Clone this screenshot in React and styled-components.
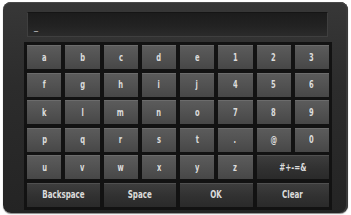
import styled, { createGlobalStyle } from 'styled-components';

const GlobalStyle = createGlobalStyle`
  html, body {
    margin: 0;
    padding: 0;
    background: #ffffff;
  }
`;

const Page = styled.div`
  width: 351px;
  height: 215px;
  padding: 2px 3px;
  box-sizing: border-box;
`;

const Panel = styled.div`
  width: 345px;
  height: 211px;
  box-sizing: border-box;
  padding: 10px 16px 3px 21px;
  border-radius: 8px;
  background: linear-gradient(180deg, #373737 0%, #2c2c2c 40%, #242424 100%);
  box-shadow: inset 0 1px 0 #4a4a4a, inset -2px 0 0 #3a3a3a, 0 1px 1px #8a8a8a;
  display: flex;
  flex-direction: column;
  gap: 5px;
`;

const InputField = styled.div`
  margin-left: 3px;
  width: 301px;
  height: 25px;
  box-sizing: border-box;
  padding: 0 0 4px 6px;
  display: flex;
  align-items: flex-end;
  background: linear-gradient(180deg, #1c1c1c 0%, #232323 60%, #2b2b2b 100%);
  border: 1px solid #3f3f3f;
  border-top-color: #151515;
  color: #d8d8d8;
  font-family: 'DejaVu Sans Condensed', 'DejaVu Sans', sans-serif;
  font-size: 9px;
  line-height: 1;
`;

const KeyFrame = styled.div`
  width: 308px;
  box-sizing: border-box;
  padding: 3px;
  background: #121212;
  display: grid;
  grid-template-columns: repeat(8, 1fr);
  grid-template-rows: repeat(6, 24px);
  column-gap: 4px;
  row-gap: 3.6px;
`;

const Key = styled.div`
  grid-column: span ${({ $span }) => $span || 1};
  display: flex;
  align-items: center;
  justify-content: center;
  background: ${({ $dark }) =>
    $dark
      ? 'linear-gradient(180deg, #3e3e3e 0%, #313131 55%, #2a2a2a 100%)'
      : 'linear-gradient(180deg, #5c5c5c 0%, #525252 50%, #474747 100%)'};
  box-shadow: inset 0 1px 0 ${({ $dark }) => ($dark ? '#505050' : '#6c6c6c')};
`;

const Label = styled.span`
  display: inline-block;
  color: #dcdcdc;
  font-family: 'DejaVu Sans Condensed', 'DejaVu Sans', sans-serif;
  font-size: 11px;
  font-weight: bold;
  line-height: 1;
  transform: scaleX(${({ $big }) => ($big ? 0.72 : 0.68)});
  white-space: nowrap;
`;

const rows = [
  ['a', 'b', 'c', 'd', 'e', '1', '2', '3'],
  ['f', 'g', 'h', 'i', 'j', '4', '5', '6'],
  ['k', 'l', 'm', 'n', 'o', '7', '8', '9'],
  ['p', 'q', 'r', 's', 't', '.', '@', '0'],
  ['u', 'v', 'w', 'x', 'y', 'z']
];

const wideKeys = ['Backspace', 'Space', 'OK', 'Clear'];

export default function App() {
  return (
    <Page>
      <GlobalStyle />
      <Panel>
        <InputField>_</InputField>
        <KeyFrame>
          {rows.flat().map((k, i) => (
            <Key key={i}>
              <Label>{k}</Label>
            </Key>
          ))}
          <Key $span={2} $dark>
            <Label $big>#+-=&amp;</Label>
          </Key>
          {wideKeys.map((k) => (
            <Key key={k} $span={2} $dark>
              <Label $big>{k}</Label>
            </Key>
          ))}
        </KeyFrame>
      </Panel>
    </Page>
  );
}
